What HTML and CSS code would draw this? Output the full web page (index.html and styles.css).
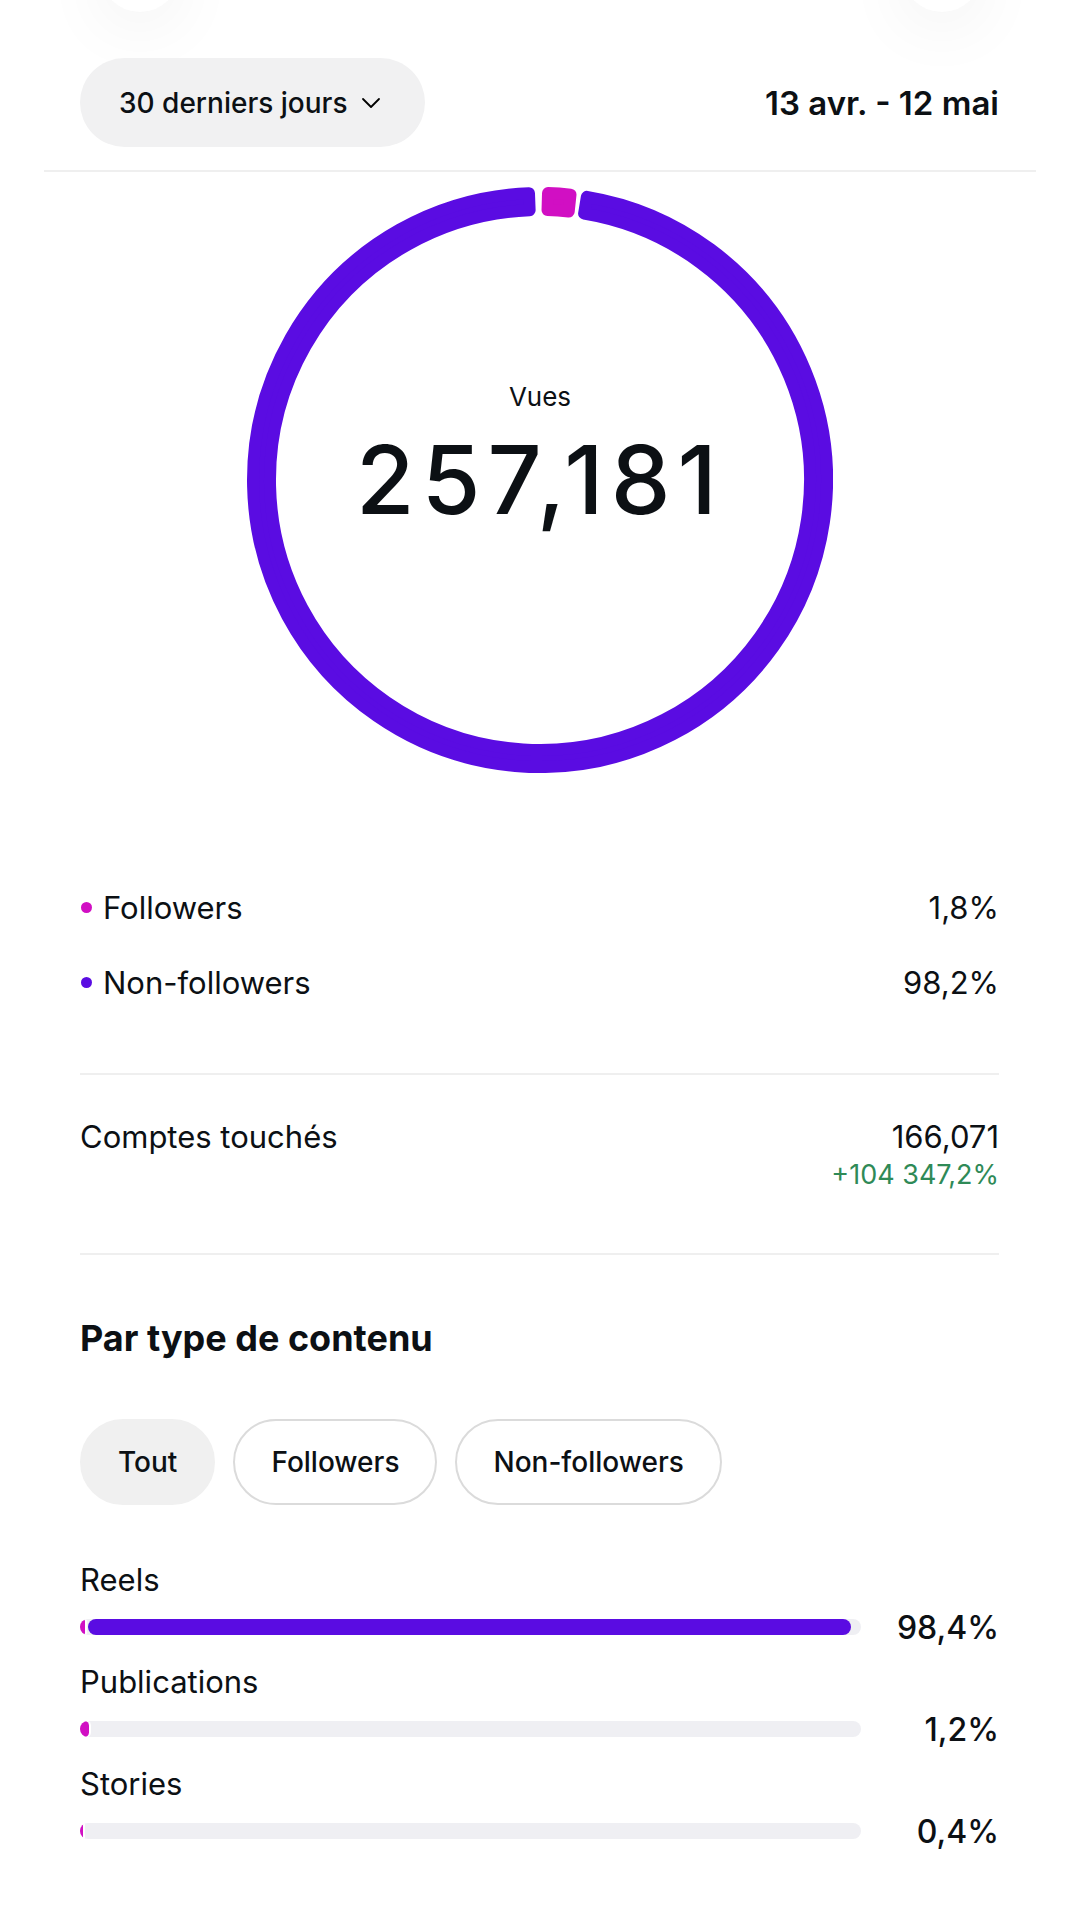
FILE: index.html
```html
<!DOCTYPE html>
<html lang="fr">
<head>
    <meta charset="UTF-8">
    <meta name="viewport" content="width=device-width, initial-scale=1.0">
    <title>Statistiques - Vues</title>
    <link rel="stylesheet" href="styles.css">
</head>
<body>
    <div class="ghost-row">
        <div class="ghost"></div>
        <div class="ghost"></div>
    </div>

    <div class="filter-row">
        <button class="period-pill">30 derniers jours
            <svg class="chevron" viewBox="0 0 24 24" width="24" height="24"><path d="M4 8 L12 16 L20 8" fill="none" stroke="#000" stroke-width="1.8" stroke-linecap="round" stroke-linejoin="round"/></svg>
        </button>
        <div class="date-range">13 avr. - 12 mai</div>
    </div>
    <div class="rule-wide"></div>

    <section class="donut">
        <svg class="ring" viewBox="0 0 586 586" width="586" height="586">
            <!-- non-followers -->
            <path d="M339.88 9.85 A287 287 0 1 1 281.98 6.21 L282.63 23.20 A270 270 0 1 0 337.10 26.63 Z" fill="#5a0ce2" stroke="#5a0ce2" stroke-width="12" stroke-linejoin="round"/>
            <!-- followers -->
            <path d="M301.01 6.11 A287 287 0 0 1 323.50 7.62 L321.69 24.53 A270 270 0 0 0 300.54 23.11 Z" fill="#d10fc3" stroke="#d10fc3" stroke-width="12" stroke-linejoin="round"/>
        </svg>
        <div class="donut-label">
            <div class="donut-title">Vues</div>
            <div class="donut-value">257,181</div>
        </div>
    </section>

    <section class="content">
        <div class="legend">
            <div class="legend-row">
                <span class="legend-name"><span class="dot followers"></span>Followers</span>
                <span>1,8%</span>
            </div>
            <div class="legend-row">
                <span class="legend-name"><span class="dot non-followers"></span>Non-followers</span>
                <span>98,2%</span>
            </div>
        </div>

        <div class="rule"></div>

        <div class="stat-row">
            <span>Comptes touchés</span>
            <div class="stat-values">
                <div>166,071</div>
                <div class="delta">+104 347,2%</div>
            </div>
        </div>

        <div class="rule"></div>

        <h2 class="section-title">Par type de contenu</h2>

        <div class="chips">
            <button class="chip active">Tout</button>
            <button class="chip">Followers</button>
            <button class="chip">Non-followers</button>
        </div>

        <div id="breakdown" class="breakdown"></div>
    </section>

    <script>
        const types = [
            { name: 'Reels', followers: 0.6, nonFollowers: 97.8, total: '98,4%' },
            { name: 'Publications', followers: 1.2, nonFollowers: 0, total: '1,2%' },
            { name: 'Stories', followers: 0.4, nonFollowers: 0, total: '0,4%' }
        ];

        document.getElementById('breakdown').innerHTML = types.map(t => `
            <div class="type-item">
                <div class="type-name">${t.name}</div>
                <div class="bar-row">
                    <div class="track">
                        <div class="seg seg-f" style="width: ${t.followers}%"></div>
                        ${t.nonFollowers ? `<div class="seg seg-nf" style="width: ${t.nonFollowers}%"></div>` : ''}
                    </div>
                    <div class="bar-value">${t.total}</div>
                </div>
            </div>
        `).join('');
    </script>
</body>
</html>
```

FILE: styles.css
```css
/* Global */
body {
    margin: 0;
    padding: 0;
    background: #fff;
    color: #0c1014;
    font-family: Inter, "Noto Sans", sans-serif;
    width: 1080px;
    overflow: hidden;
}

button {
    font-family: inherit;
    color: inherit;
}

/* Scrolled-off header buttons */
.ghost-row {
    display: flex;
    justify-content: space-between;
    padding: 0 98px 0 100px;
    height: 0;
}

.ghost {
    width: 80px;
    height: 80px;
    margin-top: -68px;
    border-radius: 50%;
    background: #fff;
    box-shadow: 0 14px 70px rgba(0, 0, 0, 0.06);
}

/* Period filter */
.filter-row {
    display: flex;
    justify-content: space-between;
    align-items: center;
    padding: 58px 81px 0 80px;
}

.period-pill {
    display: flex;
    align-items: center;
    gap: 12px;
    height: 89px;
    padding: 0 42px 0 39px;
    border: none;
    border-radius: 45px;
    background: #f1f1f2;
    font-size: 28px;
    font-weight: 500;
}

.chevron {
    width: 24px;
    height: 24px;
}

.date-range {
    font-size: 33px;
    font-weight: 600;
}

.rule-wide {
    height: 2px;
    margin: 23px 44px 0;
    background: #efefef;
}

/* Donut */
.donut {
    display: grid;
    justify-content: center;
    margin-top: 15px;
}

.donut > * {
    grid-area: 1 / 1;
}

.donut-label {
    justify-self: center;
    align-self: start;
    margin-top: 195px;
    text-align: center;
}

.donut-title {
    font-size: 26px;
    line-height: 30px;
}

.donut-value {
    margin-top: 18px;
    font-size: 95px;
    font-weight: 500;
    line-height: 100px;
    letter-spacing: 7px;
}

/* Content */
.content {
    padding: 0 81px 0 80px;
    font-size: 31px;
}

.legend {
    margin-top: 97px;
}

.legend-row {
    display: flex;
    justify-content: space-between;
    align-items: center;
    height: 75px;
}

.legend-name {
    display: flex;
    align-items: center;
}

.dot {
    width: 11px;
    height: 11px;
    border-radius: 50%;
    margin: 0 11px 0 1px;
}

.dot.followers { background: #d10fc3; }
.dot.non-followers { background: #5a0ce2; }

.rule {
    height: 2px;
    background: #efefef;
    margin-top: 53px;
}

.stat-row {
    display: flex;
    justify-content: space-between;
    align-items: flex-start;
    margin-top: 44px;
    line-height: 36px;
}

.stat-values {
    text-align: right;
}

.delta {
    margin-top: 5px;
    font-size: 27px;
    line-height: 30px;
    color: #2f8a57;
}

.stat-row + .rule {
    margin-top: 63px;
}

.section-title {
    margin: 63px 0 0;
    font-size: 36px;
    font-weight: 700;
    line-height: 40px;
}

/* Chips */
.chips {
    display: flex;
    gap: 18px;
    margin-top: 61px;
}

.chip {
    height: 86px;
    padding: 0 36px;
    border: 2px solid #dbdbdb;
    border-radius: 43px;
    background: #fff;
    font-size: 28px;
    font-weight: 500;
}

.chip.active {
    border-color: #f0f0f0;
    background: #f0f0f0;
}

/* Content type bars */
.breakdown {
    margin-top: 57px;
}

.type-item + .type-item {
    margin-top: 17px;
}

.type-name {
    line-height: 36px;
}

.bar-row {
    display: flex;
    align-items: center;
    height: 40px;
    margin-top: 9px;
}

.track {
    display: flex;
    flex: 0 0 781px;
    height: 16px;
    border-radius: 8px;
    background: #efeff3;
    overflow: hidden;
}

.seg {
    height: 100%;
    min-width: 3px;
}

.seg-f {
    background: #d10fc3;
    border-radius: 8px;
    box-shadow: 2px 0 0 #fff;
}

.seg-nf {
    margin-left: 3px;
    background: #5a0ce2;
    border-radius: 8px;
}

.bar-value {
    flex: 1;
    text-align: right;
    font-size: 32px;
    font-weight: 500;
}
```
